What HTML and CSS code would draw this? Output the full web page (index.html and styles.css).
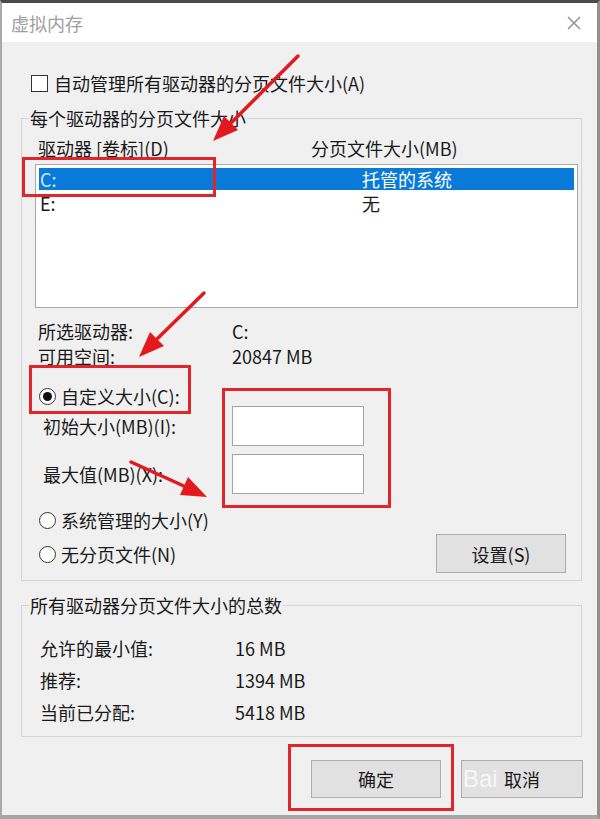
FILE: index.html
```html
<!DOCTYPE html>
<html lang="zh-CN">
<head>
<meta charset="utf-8">
<title>虚拟内存</title>
<link rel="stylesheet" href="styles.css">
</head>
<body>
<div class="window">
  <div class="titlebar">
    <span class="title">虚拟内存</span>
    <svg class="close" width="16" height="16" viewBox="0 0 16 16"><path d="M2 2 L14 14 M14 2 L2 14" stroke="#8c8c8c" stroke-width="1.4" fill="none"/></svg>
  </div>
  <div class="content">
    <div class="check-row"><span class="checkbox"></span><span>自动管理所有驱动器的分页文件大小(A)</span></div>

    <fieldset class="group g1">
      <legend>每个驱动器的分页文件大小</legend>
      <div class="list-head"><span class="c1">驱动器 [卷标](D)</span><span class="c2">分页文件大小(MB)</span></div>
      <div class="list">
        <div class="row sel"><span class="c1">C:</span><span class="c2">托管的系统</span></div>
        <div class="row"><span class="c1">E:</span><span class="c2">无</span></div>
      </div>
      <div class="info">
        <div class="kv"><span class="k">所选驱动器:</span><span class="v">C:</span></div>
        <div class="kv"><span class="k">可用空间:</span><span class="v">20847 MB</span></div>
      </div>
      <div class="radio-row custom"><span class="radio checked"></span><span>自定义大小(C):</span></div>
      <div class="size-row"><span class="k">初始大小(MB)(I):</span><span class="input"></span></div>
      <div class="size-row"><span class="k">最大值(MB)(X):</span><span class="input"></span></div>
      <div class="bottom-row">
        <div class="radios">
          <div class="radio-row"><span class="radio"></span><span>系统管理的大小(Y)</span></div>
          <div class="radio-row"><span class="radio"></span><span>无分页文件(N)</span></div>
        </div>
        <button class="btn set">设置(S)</button>
      </div>
    </fieldset>

    <fieldset class="group g2">
      <legend>所有驱动器分页文件大小的总数</legend>
      <div class="tot"><span class="k">允许的最小值:</span><span class="v">16 MB</span></div>
      <div class="tot"><span class="k">推荐:</span><span class="v">1394 MB</span></div>
      <div class="tot"><span class="k">当前已分配:</span><span class="v">5418 MB</span></div>
    </fieldset>

    <div class="footer">
      <button class="btn ok">确定</button>
      <button class="btn cancel">取消</button>
    </div>
  </div>
</div>

<div class="mark box1"></div>
<div class="mark box2"></div>
<div class="mark box3"></div>
<div class="mark box4"></div>
<span class="watermark">Bai</span>

<svg class="arrows" width="600" height="819" viewBox="0 0 600 819">
  <g fill="#e3191e" stroke="#e3191e" stroke-linecap="round">
    <line x1="298" y1="56" x2="229" y2="125" stroke-width="3.5"/>
    <polygon points="213,141 238,130 224,116" stroke="none"/>
    <line x1="204" y1="293" x2="156" y2="340" stroke-width="3.5"/>
    <polygon points="139,357 164,346 150,332" stroke="none"/>
    <line x1="131" y1="462" x2="186" y2="487" stroke-width="3.5"/>
    <polygon points="207,497 180,495 188,477" stroke="none"/>
  </g>
</svg>
</body>
</html>
```

FILE: styles.css
```css
* { box-sizing: border-box; }
html, body { margin: 0; padding: 0; }
body {
  position: relative;
  width: 600px;
  height: 819px;
  overflow: hidden;
  background: #f0f0f0;
  font-family: "Noto Sans CJK SC", "Noto Sans", sans-serif;
  font-size: 18px;
  color: #1a1a1a;
}
.window {
  width: 600px;
  height: 819px;
  border-top: 3px solid #4a4a4a;
  border-left: 2px solid #a9a9a9;
  border-right: 3px solid #909090;
  border-bottom: 4px solid #a6a6a6;
  background: #f0f0f0;
  display: flex;
  flex-direction: column;
}
.titlebar {
  height: 39px;
  background: #fff;
  display: flex;
  align-items: center;
  justify-content: space-between;
  padding: 0 15px 0 9px;
  flex-shrink: 0;
}
.title { color: #a0a0a0; font-size: 18px; line-height: 20px; }
.close { display: block; }
.content { flex: 1; display: flex; flex-direction: column; }

.check-row {
  margin: 31px 0 0 29px;
  height: 20px;
  line-height: 20px;
  display: flex;
  align-items: center;
  gap: 6px;
}
.checkbox {
  width: 17px; height: 17px;
  border: 1px solid #333;
  background: #fff;
  flex-shrink: 0;
}

.group {
  margin: 0 0 0 19px;
  width: 561px;
  min-width: 0;
  padding: 0;
  border: 1px solid #d4d4d4;
}
.group legend {
  padding: 0 1px;
  margin-left: 7px;
  height: 20px;
  line-height: 20px;
}
.g1 { margin-top: 15px; padding-bottom: 7px; }
.list-head {
  margin: 10px 0 0 16px;
  height: 20px;
  line-height: 20px;
  display: flex;
}
.list-head .c1 { width: 273px; }
.list {
  margin: 6px 0 0 13px;
  width: 543px;
  height: 144px;
  border: 1px solid #a8a8a8;
  background: #fff;
  padding: 3px 3px;
}
.row {
  height: 22px;
  line-height: 22px;
  display: flex;
  padding-left: 1px;
}
.row + .row { margin-top: 2px; }
.row .c1 { width: 322px; }
.row.sel { background: #0a7ad8; color: #fff; }
.row.sel .c1 { color: #cfe6ff; }

.info { margin: 11px 0 0 16px; }
.kv { height: 25px; line-height: 25px; display: flex; }
.kv .k { width: 194px; }

.radio-row {
  height: 20px;
  line-height: 20px;
  display: flex;
  align-items: center;
  gap: 5px;
}
.custom { margin: 17px 0 0 17px; }
.radio {
  width: 17px; height: 17px;
  border: 1px solid #333;
  border-radius: 50%;
  background: #fff;
  flex-shrink: 0;
  display: flex;
  align-items: center;
  justify-content: center;
}
.radio.checked::after {
  content: "";
  width: 9px; height: 9px;
  border-radius: 50%;
  background: #111;
}

.size-row {
  margin-left: 21px;
  height: 40px;
  display: flex;
  align-items: center;
}
.size-row + .size-row { margin-top: 8px; }
.size-row .k { width: 189px; }
.input {
  width: 132px;
  height: 40px;
  background: #fff;
  border: 1px solid #a4a4a4;
}

.bottom-row { margin-top: 16px; display: flex; align-items: flex-start; }
.radios { margin-left: 17px; display: flex; flex-direction: column; gap: 14px; }
.btn {
  font: inherit;
  color: #1a1a1a;
  background: #e1e1e1;
  border: 1px solid #adadad;
  padding: 0;
}
.set { margin: 24px 15px 0 auto; width: 130px; height: 39px; }

.g2 { margin-top: 14px; padding-bottom: 8px; }
.g2 legend { margin-left: 7px; }
.tot { height: 32px; line-height: 32px; display: flex; margin-left: 18px; }
.g2 .tot:first-of-type { margin-top: 17px; }
.tot .k { width: 195px; }

.footer {
  margin-top: 23px;
  display: flex;
  justify-content: flex-end;
  gap: 20px;
  padding-right: 14px;
}
.ok { width: 130px; height: 38px; }
.cancel { width: 122px; height: 38px; }

.mark {
  position: absolute;
  border: 3px solid #e0252b;
}
.box1 { left: 22px; top: 157px; width: 194px; height: 40px; }
.box2 { left: 29px; top: 365px; width: 162px; height: 49px; }
.box3 { left: 222px; top: 388px; width: 169px; height: 120px; }
.box4 { left: 288px; top: 744px; width: 166px; height: 67px; }

.watermark {
  position: absolute;
  left: 463px;
  top: 764px;
  font-family: "Liberation Sans", sans-serif;
  font-size: 24px;
  line-height: 30px;
  color: rgba(255, 255, 255, 0.75);
}
.arrows { position: absolute; left: 0; top: 0; pointer-events: none; }
```
